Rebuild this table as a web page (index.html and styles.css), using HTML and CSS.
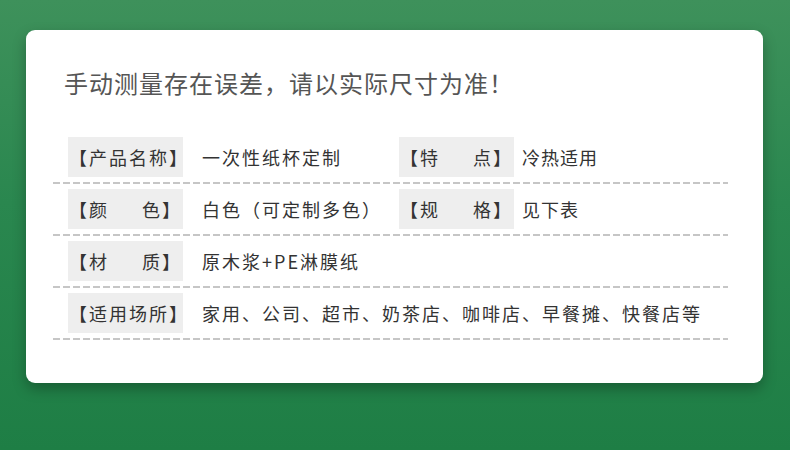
FILE: index.html
```html
<!DOCTYPE html>
<html lang="zh-CN">
<head>
  <meta charset="UTF-8">
  <title>产品参数</title>
  <meta name="viewport" content="width=device-width, initial-scale=1">
  <link rel="stylesheet" href="styles.css">
</head>
<body>
  <div class="card">
    <div class="notice">手动测量存在误差，请以实际尺寸为准！</div>
    <div class="specs">
      <div class="row">
        <div class="cell">
          <div class="label">【产品名称】</div>
          <div class="value">一次性纸杯定制</div>
        </div>
        <div class="cell right">
          <div class="label spread"><span>【特</span><span>点】</span></div>
          <div class="value">冷热适用</div>
        </div>
      </div>
      <div class="rule"></div>
      <div class="row">
        <div class="cell">
          <div class="label spread"><span>【颜</span><span>色】</span></div>
          <div class="value">白色（可定制多色）</div>
        </div>
        <div class="cell right">
          <div class="label spread"><span>【规</span><span>格】</span></div>
          <div class="value">见下表</div>
        </div>
      </div>
      <div class="rule"></div>
      <div class="row">
        <div class="cell">
          <div class="label spread"><span>【材</span><span>质】</span></div>
          <div class="value">原木浆+PE淋膜纸</div>
        </div>
      </div>
      <div class="rule"></div>
      <div class="row">
        <div class="cell">
          <div class="label">【适用场所】</div>
          <div class="value">家用、公司、超市、奶茶店、咖啡店、早餐摊、快餐店等</div>
        </div>
      </div>
      <div class="rule"></div>
    </div>
  </div>
</body>
</html>
```

FILE: styles.css
```css
html, body {
  margin: 0;
  padding: 0;
  height: 100%;
}

body {
  background: linear-gradient(to bottom, #3e915b 0%, #2a874f 45%, #1e7e45 100%);
  font-family: "Noto Sans CJK SC", "Noto Sans", sans-serif;
  color: #333;
  padding: 30px 27px 0 26px;
  box-sizing: border-box;
}

.card {
  background-color: #fff;
  border-radius: 9px;
  width: 737px;
  height: 353px;
  box-sizing: border-box;
  padding: 38px 35px 0 27px;
  box-shadow: 0 6px 14px rgba(0, 0, 0, 0.28);
}

.notice {
  font-size: 24px;
  line-height: 30px;
  color: #555;
  margin-left: 11px;
  letter-spacing: 1px;
}

.specs {
  margin-top: 39px;
}

.row {
  display: flex;
  padding: 0 0 5px 15px;
}

.cell {
  display: flex;
  align-items: center;
  width: 331px;
  flex-shrink: 0;
}

.cell.right {
  width: auto;
}

.label {
  flex-shrink: 0;
  background-color: #eee;
  width: 115px;
  height: 40px;
  box-sizing: border-box;
  padding: 0 3px 0 1px;
  font-size: 18px;
  line-height: 40px;
  letter-spacing: 2px;
  color: #333;
  white-space: nowrap;
}

.label.spread {
  display: flex;
  justify-content: space-between;
  padding-right: 1px;
}

.value {
  margin-left: 19px;
  font-size: 18px;
  letter-spacing: 2px;
  color: #333;
  white-space: nowrap;
}

.cell.right .value {
  margin-left: 8px;
  letter-spacing: 1px;
}

.rule {
  height: 2px;
  margin-bottom: 5px;
  background: repeating-linear-gradient(to right, #c6c6c6 0 7px, transparent 7px 10px);
}
```
